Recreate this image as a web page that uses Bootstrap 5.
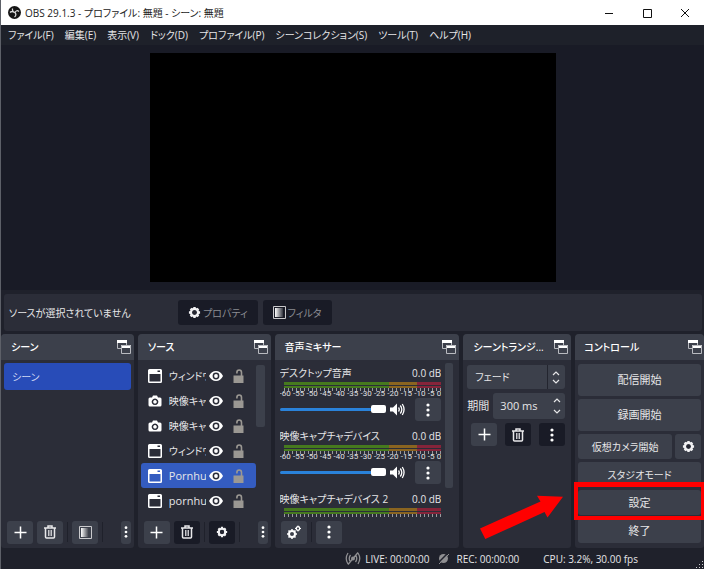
<!DOCTYPE html>
<html lang="ja">
<head>
<meta charset="utf-8">
<meta name="viewport" content="width=device-width, initial-scale=1">
<title>OBS 29.1.3 - プロファイル: 無題 - シーン: 無題</title>
<link href="https://cdn.jsdelivr.net/npm/bootstrap@5.3.0/dist/css/bootstrap.min.css" rel="stylesheet">
<style>
:root{--base:#1f212b;--panel:#2b2d38;--ctl:#3c404b;--off:#191b26;--fg:#e6e6e8}
body{font-family:"Open Sans","Noto Sans CJK JP",sans-serif;font-size:11px;line-height:16px;font-feature-settings:"palt";color:var(--fg);background:var(--base);min-height:100vh;overflow:hidden;border-left:1px solid #5d6068}
button,input,select{font-feature-settings:inherit;color:inherit;line-height:16px}
svg{display:block;flex:none}
.kana{font-size:10px}
.titlebar{height:25px;background:#fff;color:#222;padding-left:7px;font-size:10px}
.titlebar button{width:38px;height:25px;color:#111}
.menubar{height:20px;background:#1e212a;gap:11px;padding-left:7px;font-size:10px}
.menubar a{color:var(--fg);text-decoration:none}
.preview{background:var(--off);padding:8px 0}
.canvas-area{background:#000;aspect-ratio:406/229;height:229px}
.context{background:var(--panel);height:37px;margin:4px 2px 3px 3px;padding-left:5px;border-radius:3px;gap:5px;font-size:10px}
.context-label{width:164px}
.obtn{background:var(--ctl);border:0;border-radius:3px;color:var(--fg);padding:0;display:flex;align-items:center;justify-content:center;height:25px}
.obtn.off{background:var(--off)}
.context .obtn{color:#8b8d93;padding:0 10px;gap:2px}
.docks{display:grid;grid-template-columns:133fr 133fr 185fr 108fr 129fr;gap:4px}
.dock{background:var(--panel);border-radius:4px 4px 3px 3px;min-width:0;display:flex;flex-direction:column}
.dock-head{background:var(--ctl);height:26px;padding:0 3px 0 10px;border-radius:4px 4px 0 0}
.dock:last-child .dock-head{padding:0 2px 0 9px}
.dock-head h2{font-size:10px;line-height:16px;margin:0;font-weight:500;color:#fff}
.dock-tools{gap:4px;padding:0 3px 3px 6px;height:29px}
.dock-tools .obtn,.tool{width:26px;height:23px}
.dock-tools .obtn.slim{width:10px}
.rule{width:1px;height:20px;background:#1f212b}
.scene{background:#284cb8;color:#cfd8f4;height:27px;border:0;border-radius:3px;margin:3px 3px 0;padding-left:8px;text-align:left}
.src-list{width:115px;margin-left:3px;padding-top:3px}
.src{height:25px;padding-left:7px;border-radius:3px}
.src.sel{background:#345cc0}
.src-name{width:37px;margin:0 3px 0 7px;overflow:hidden;white-space:nowrap}
.src button{border:0;background:none;padding:0}
.src button+button{margin-left:10px}
.bar-v{width:9px;background:var(--ctl);border-radius:2px;margin-top:5px}
.bar-v.short{height:62px}
.bar-v.long{height:125px;margin-top:3px;width:8px}
.mixer{flex:1 1 0;min-height:0;overflow:hidden;padding:0 6px 0 5px}
.channels{overflow:hidden;height:157px;font-size:10px;line-height:14px;white-space:nowrap}
.chan{height:63px;padding-top:6px}
.meter{height:3px;margin-left:4px;background:linear-gradient(90deg,#467a1e 67%,#8a6420 67% 85%,#86243a 85%)}
.meter.first{margin-top:2px}
.meter+.meter{margin-top:1px;height:2px}
.ticks{height:3px;margin-left:4px;background:repeating-linear-gradient(90deg,#9a9a9e 0 1px,transparent 1px 4px)}
.scale{font-family:Roboto,"Liberation Sans",sans-serif;font-size:8px;line-height:9px;color:#e0e0e2;margin-top:-2px}
.vol{-webkit-appearance:none;appearance:none;width:106px;height:9px;background:none;margin:0}
.vol::-webkit-slider-runnable-track{height:3px;background:#2a82da;border-radius:2px}
.vol::-webkit-slider-thumb{-webkit-appearance:none;width:15px;height:8px;background:#fff;border-radius:2px;margin-top:-3px}
.trans{padding:5px 6px 0 4px;gap:4px}
.trans select{appearance:none;height:24px;border:0;border-radius:3px;padding:0 8px;background:linear-gradient(90deg,#23252f,#23252f) calc(100% - 17px) 0/1px 100% no-repeat var(--ctl)}
.pick{position:absolute;right:5px;top:6px;pointer-events:none}
.spin{background:var(--ctl);border-radius:3px;height:26px;padding:0 4px 0 7px}
.spin input{border:0;background:none;width:40px;min-width:0;font-size:11px;padding:0;outline:0}
.spin button{border:0;background:none;padding:0;height:11px;display:flex;align-items:center}
.pointer{position:absolute;right:8px;bottom:8px}
.controls{padding:4px 3px 5px;gap:3px}
.pair{gap:3px}
.tall{height:32px}
.target{position:relative}
.target::after{content:"";position:absolute;inset:-8px -3px -5px -4px;border:solid red;border-width:5px 3px 4px 4px;z-index:2}
.status{height:21px;font-size:10px;padding-right:66px;position:relative}
.grip{position:absolute;right:0;bottom:0}
</style>
<script src="https://cdn.jsdelivr.net/npm/bootstrap@5.3.0/dist/js/bootstrap.bundle.min.js"></script>
</head>
<body class="d-flex flex-column">
<svg width="0" height="0" class="position-absolute" aria-hidden="true">
<symbol id="float" viewBox="0 0 14 14"><path fill="none" stroke="#b9bbc0" d="M4.500 8.500H.5V1H9.500V5"/><path fill="#fff" d="M0 0h10v3H0zM4 5h10v3H4z"/><path fill="none" stroke="#b9bbc0" d="M4.500 5.500h9v8h-9z"/></symbol>
<symbol id="plus" viewBox="0 0 13 13"><path stroke="#fff" stroke-width="1.500" d="M6.500 .5v12M.5 6.500h12"/></symbol>
<symbol id="trash" viewBox="0 0 14 14"><path fill="none" stroke="#e8e8ea" stroke-width="1.500" d="M1 3h12M5 2.500V1h4v1.500M2.500 3.500V12q0 1 1 1h7q1 0 1-1V3.500"/><path stroke="#c8c8cc" d="M5.500 5v6M7 5v6M8.500 5v6"/></symbol>
<symbol id="filter" viewBox="0 0 13 13"><defs><linearGradient id="fg"><stop offset="0" stop-color="#fff"/><stop offset="1" stop-color="#333640"/></linearGradient></defs><path fill="none" stroke="#c9c9cc" d="M.5 .5h12v12H.5z"/><path fill="url(#fg)" d="M2 2h8v9H2z"/></symbol>
<symbol id="dots" viewBox="0 0 4 14"><g fill="#fff"><circle cx="2" cy="2" r="1.600"/><circle cx="2" cy="7" r="1.600"/><circle cx="2" cy="12" r="1.600"/></g></symbol>
<symbol id="gear" viewBox="0 0 14 14"><circle cx="7" cy="7" r="3.800" fill="none" stroke="#f2f2f4" stroke-width="2.600"/><path stroke="#f2f2f4" stroke-width="2.600" d="M7 1v2M7 11v2M1 7h2M11 7h2M2.800 2.800l1.200 1.200M10 10l1.200 1.200M2.800 11.200L4 10M10 4l1.200-1.200"/><circle cx="7" cy="7" r="2.300" fill="#252732"/></symbol>
<symbol id="win" viewBox="0 0 14 14"><path fill="#fff" fill-rule="evenodd" d="M1.500 0h11q1.500 0 1.500 1.500v11q0 1.500-1.500 1.500h-11q-1.500 0-1.500-1.500v-11q0-1.500 1.500-1.500M1.500 5v7.500h11V5zM9.500 1.500v1.500h2.500V1.500z"/></symbol>
<symbol id="cam" viewBox="0 0 14 14"><path fill="#fff" fill-rule="evenodd" d="M2 3.500h2L5 1.500h4l1 2h2Q13.500 3.500 13.500 5v6q0 1.500-1.500 1.500H2Q.5 12.500 .5 11V5q0-1.500 1.500-1.500M7 4.500a3.300 3.300 0 1 0 .01 0M7 6a1.800 1.800 0 1 1-.01 0"/></symbol>
<symbol id="eye" viewBox="0 0 14 12"><path fill="#fff" d="M7 1Q11.500 1 14 6 11.500 11 7 11T0 6Q2.500 1 7 1"/><circle cx="7" cy="6" r="3.400" fill="#2b2d38"/><circle cx="7" cy="6" r="1.900" fill="#fff"/></symbol>
<symbol id="lock" viewBox="0 0 11 14"><path fill="#9b9893" d="M.5 6.500h10V14H.5z"/><path fill="none" stroke="#9b9893" stroke-width="1.600" d="M8.500 7V3.500a2.300 2.500 0 0 0-4.600 0V4.500"/></symbol>
<symbol id="speaker" viewBox="0 0 15 12"><path fill="#fff" d="M0 4h3l4-4v12L3 8H0z"/><path fill="none" stroke="#fff" stroke-width="1.300" d="M8.500 4q1.500 2 0 4M10.300 2q3 4 0 8M12.300 .5q3.500 5.500 0 11"/></symbol>
<symbol id="up" viewBox="0 0 8 5"><path fill="none" stroke="#e6e6e8" stroke-width="1.200" d="M1 4l3-3 3 3"/></symbol>
<symbol id="down" viewBox="0 0 8 5"><path fill="none" stroke="#e6e6e8" stroke-width="1.200" d="M1 1l3 3 3-3"/></symbol>
</svg>

<header class="titlebar d-flex align-items-center">
<svg width="13" height="13" viewBox="0 0 26 26"><circle cx="13" cy="13" r="13" fill="#151515"/><path fill="none" stroke="#ddd" stroke-width="2.500" d="M9 5q-1 7 5 8M22 11q-5-4-8 2M13 22q5-4 1-9M4 13q4-4 9 0"/></svg>
<span class="ms-1 me-auto">OBS 29.1.3 - プロファイル: 無題 - シーン: 無題</span>
<button class="btn p-0 border-0 rounded-0 d-flex align-items-center justify-content-center" aria-label="最小化"><svg width="10" height="10"><path stroke="#111" d="M1 5.500h8"/></svg></button>
<button class="btn p-0 border-0 rounded-0 d-flex align-items-center justify-content-center" aria-label="最大化"><svg width="10" height="10"><path fill="none" stroke="#111" d="M1.500 1.500h8v8h-8z"/></svg></button>
<button class="btn p-0 border-0 rounded-0 d-flex align-items-center justify-content-center" aria-label="閉じる"><svg width="10" height="10"><path stroke="#111" d="M1 1l8 8M9 1l-8 8"/></svg></button>
</header>
<nav class="menubar d-flex align-items-center text-nowrap">
<a href="#">ファイル(F)</a><a href="#">編集(E)</a><a href="#">表示(V)</a><a href="#">ドック(D)</a><a href="#">プロファイル(P)</a><a href="#">シーンコレクション(S)</a><a href="#">ツール(T)</a><a href="#">ヘルプ(H)</a>
</nav>
<main class="d-flex flex-column flex-grow-1">
<section class="preview flex-grow-1 d-flex justify-content-center"><div class="canvas-area"></div></section>
<section class="context d-flex align-items-center">
<span class="context-label">ソースが選択されていません</span>
<button class="obtn off"><svg width="13" height="13"><use href="#gear"/></svg>プロパティ</button>
<button class="obtn off"><svg width="13" height="13"><use href="#filter"/></svg>フィルタ</button>
</section>
<div class="docks">
<section class="dock">
<div class="dock-head d-flex align-items-center justify-content-between"><h2>シーン</h2><svg width="14" height="14"><use href="#float"/></svg></div>
<button class="scene kana">シーン</button>
<div class="dock-tools d-flex align-items-center mt-auto">
<button class="obtn" aria-label="追加"><svg width="13" height="13"><use href="#plus"/></svg></button>
<button class="obtn" aria-label="削除"><svg width="14" height="14"><use href="#trash"/></svg></button><i class="rule"></i>
<button class="obtn" aria-label="フィルタ"><svg width="13" height="13"><use href="#filter"/></svg></button><i class="rule"></i>
<button class="obtn slim ms-auto" aria-label="メニュー"><svg width="4" height="12"><use href="#dots"/></svg></button>
</div>
</section>
<section class="dock">
<div class="dock-head d-flex align-items-center justify-content-between"><h2>ソース</h2><svg width="14" height="14"><use href="#float"/></svg></div>
<div class="d-flex">
<div class="src-list">
<div class="src d-flex align-items-center"><svg width="14" height="14"><use href="#win"/></svg><span class="src-name kana">ウィンドウ</span><button aria-label="表示"><svg width="14" height="12"><use href="#eye"/></svg></button><button aria-label="ロック"><svg width="11" height="14"><use href="#lock"/></svg></button></div>
<div class="src d-flex align-items-center"><svg width="14" height="14"><use href="#cam"/></svg><span class="src-name kana">映像キャ</span><button aria-label="表示"><svg width="14" height="12"><use href="#eye"/></svg></button><button aria-label="ロック"><svg width="11" height="14"><use href="#lock"/></svg></button></div>
<div class="src d-flex align-items-center"><svg width="14" height="14"><use href="#cam"/></svg><span class="src-name kana">映像キャ</span><button aria-label="表示"><svg width="14" height="12"><use href="#eye"/></svg></button><button aria-label="ロック"><svg width="11" height="14"><use href="#lock"/></svg></button></div>
<div class="src d-flex align-items-center"><svg width="14" height="14"><use href="#win"/></svg><span class="src-name kana">ウィンドウ</span><button aria-label="表示"><svg width="14" height="12"><use href="#eye"/></svg></button><button aria-label="ロック"><svg width="11" height="14"><use href="#lock"/></svg></button></div>
<div class="src sel d-flex align-items-center"><svg width="14" height="14"><use href="#win"/></svg><span class="src-name">Pornhu</span><button aria-label="表示"><svg width="14" height="12"><use href="#eye"/></svg></button><button aria-label="ロック"><svg width="11" height="14"><use href="#lock"/></svg></button></div>
<div class="src d-flex align-items-center"><svg width="14" height="14"><use href="#win"/></svg><span class="src-name">pornhu</span><button aria-label="表示"><svg width="14" height="12"><use href="#eye"/></svg></button><button aria-label="ロック"><svg width="11" height="14"><use href="#lock"/></svg></button></div>
</div>
<div class="bar-v short"></div>
</div>
<div class="dock-tools d-flex align-items-center mt-auto">
<button class="obtn" aria-label="追加"><svg width="13" height="13"><use href="#plus"/></svg></button>
<button class="obtn off" aria-label="削除"><svg width="14" height="14"><use href="#trash"/></svg></button><i class="rule"></i>
<button class="obtn off" aria-label="プロパティ"><svg width="12" height="12"><use href="#gear"/></svg></button><i class="rule"></i>
<button class="obtn slim ms-auto" aria-label="メニュー"><svg width="4" height="12"><use href="#dots"/></svg></button>
</div>
</section>
<section class="dock">
<div class="dock-head d-flex align-items-center justify-content-between"><h2>音声ミキサー</h2><svg width="14" height="14"><use href="#float"/></svg></div>
<div class="mixer d-flex">
<div class="channels flex-grow-1">
<div class="chan"><div class="d-flex justify-content-between"><label for="v1">デスクトップ音声</label><span>0.0 dB</span></div><div class="meter first"></div><div class="meter"></div><div class="ticks"></div>
<div class="scale d-flex justify-content-between"><span>-60</span><span>-55</span><span>-50</span><span>-45</span><span>-40</span><span>-35</span><span>-30</span><span>-25</span><span>-20</span><span>-15</span><span>-10</span><span>-5</span><span>0</span></div>
<div class="d-flex align-items-center"><input id="v1" class="vol" type="range" value="100"><svg class="ms-1" width="15" height="13"><use href="#speaker"/></svg><button class="obtn tool ms-auto" aria-label="メニュー"><svg width="4" height="14"><use href="#dots"/></svg></button></div></div>
<div class="chan"><div class="d-flex justify-content-between"><label for="v2">映像キャプチャデバイス</label><span>0.0 dB</span></div><div class="meter first"></div><div class="meter"></div><div class="ticks"></div>
<div class="scale d-flex justify-content-between"><span>-60</span><span>-55</span><span>-50</span><span>-45</span><span>-40</span><span>-35</span><span>-30</span><span>-25</span><span>-20</span><span>-15</span><span>-10</span><span>-5</span><span>0</span></div>
<div class="d-flex align-items-center"><input id="v2" class="vol" type="range" value="100"><svg class="ms-1" width="15" height="13"><use href="#speaker"/></svg><button class="obtn tool ms-auto" aria-label="メニュー"><svg width="4" height="14"><use href="#dots"/></svg></button></div></div>
<div class="chan"><div class="d-flex justify-content-between"><span>映像キャプチャデバイス 2</span><span>0.0 dB</span></div><div class="meter first"></div><div class="meter"></div><div class="ticks"></div>
<div class="scale d-flex justify-content-between"><span>-60</span><span>-55</span><span>-50</span><span>-45</span><span>-40</span><span>-35</span><span>-30</span><span>-25</span><span>-20</span><span>-15</span><span>-10</span><span>-5</span><span>0</span></div></div>
</div>
<div class="bar-v long ms-1"></div>
</div>
<div class="dock-tools d-flex align-items-center">
<button class="obtn" aria-label="詳細設定"><svg width="14" height="14" viewBox="0 0 14 14"><circle cx="5" cy="9" r="3" fill="none" stroke="#fff" stroke-width="2"/><path stroke="#fff" stroke-width="1.500" d="M5 4v1.500M5 12.500V14M0 9h1.500M8.500 9H10M1.500 5.500l1 1M7.500 11.500l1 1M1.500 12.500l1-1M7.500 6.500l1-1"/><circle cx="11" cy="3.500" r="1.700" fill="none" stroke="#fff" stroke-width="1.500"/><path stroke="#fff" d="M11 .5v6M8 3.500h1M13 3.500h1"/><circle cx="11" cy="3.500" r="1" fill="#3c404b"/></svg></button><i class="rule"></i>
<button class="obtn" aria-label="メニュー"><svg width="4" height="14"><use href="#dots"/></svg></button>
</div>
</section>
<section class="dock position-relative">
<div class="dock-head d-flex align-items-center justify-content-between"><h2 class="text-nowrap">シーントランジ...</h2><svg width="14" height="14"><use href="#float"/></svg></div>
<div class="trans d-flex flex-column">
<div class="position-relative d-flex"><select class="flex-grow-1 kana" aria-label="トランジション"><option>フェード</option></select><svg class="pick" width="8" height="13"><use href="#up" width="8" height="5"/><use href="#down" y="8" width="8" height="5"/></svg></div>
<div class="d-flex align-items-center gap-1"><label for="dur" class="text-nowrap">期間</label>
<div class="spin flex-grow-1 d-flex align-items-center"><input id="dur" value="300 ms"><div class="ms-auto"><button aria-label="増やす"><svg width="8" height="5"><use href="#up"/></svg></button><button aria-label="減らす"><svg width="8" height="5"><use href="#down"/></svg></button></div></div></div>
<div class="d-flex justify-content-between ps-1"><button class="obtn tool" aria-label="追加"><svg width="13" height="13"><use href="#plus"/></svg></button><button class="obtn off tool" aria-label="削除"><svg width="14" height="14"><use href="#trash"/></svg></button><button class="obtn off tool" aria-label="メニュー"><svg width="4" height="14"><use href="#dots"/></svg></button></div>
</div>
<svg class="pointer" width="84" height="45" viewBox="478 495 84 45" aria-hidden="true"><path fill="red" d="M562 496.700L536 495.700L539.500 501.500L479 528.500L484.300 539L543.500 512L546.500 517.500Z"/></svg>
</section>
<section class="dock">
<div class="dock-head d-flex align-items-center justify-content-between"><h2>コントロール</h2><svg width="14" height="14"><use href="#float"/></svg></div>
<div class="controls d-flex flex-column">
<button class="obtn tall">配信開始</button>
<button class="obtn tall">録画開始</button>
<div class="pair d-flex"><button class="obtn flex-grow-1 kana">仮想カメラ開始</button><button class="obtn tool h-auto" aria-label="仮想カメラ設定"><svg width="13" height="13"><use href="#gear"/></svg></button></div>
<button class="obtn kana">スタジオモード</button>
<button class="obtn target">設定</button>
<button class="obtn">終了</button>
</div>
</section>
</div>
</main>
<footer class="status d-flex align-items-center justify-content-end text-nowrap">
<svg width="16" height="13" viewBox="0 0 16 13"><g fill="none" stroke="#8f8f92" stroke-width="1.300"><path d="M3 1q-3.500 5.500 0 11M5.500 3q-2.500 3.500 0 7M13 1q3.500 5.500 0 11M10.500 3q2.500 3.500 0 7M3 12.500L13 .5"/></g><circle cx="8" cy="6.500" r="2" fill="#8f8f92"/></svg>
<span class="ms-1">LIVE: 00:00:00</span>
<svg class="ms-2" width="11" height="11" viewBox="0 0 11 11"><circle cx="5.500" cy="5.500" r="4.500" fill="#8f8f92"/><path stroke="#1f212b" stroke-width="1.500" d="M0 10L10 0"/><path stroke="#8f8f92" d="M1 11L11 1"/></svg>
<span class="ms-2">REC: 00:00:00</span>
<span class="ms-4">CPU: 3.2%, 30.00 fps</span>
<svg class="grip" width="8" height="8" viewBox="0 0 8 8"><path fill="#c8c8cc" d="M6 0h1v1H6zM3 3h1v1H3zM6 3h1v1H6zM0 6h1v1H0zM3 6h1v1H3zM6 6h1v1H6z"/></svg>
</footer>
</body>
</html>
